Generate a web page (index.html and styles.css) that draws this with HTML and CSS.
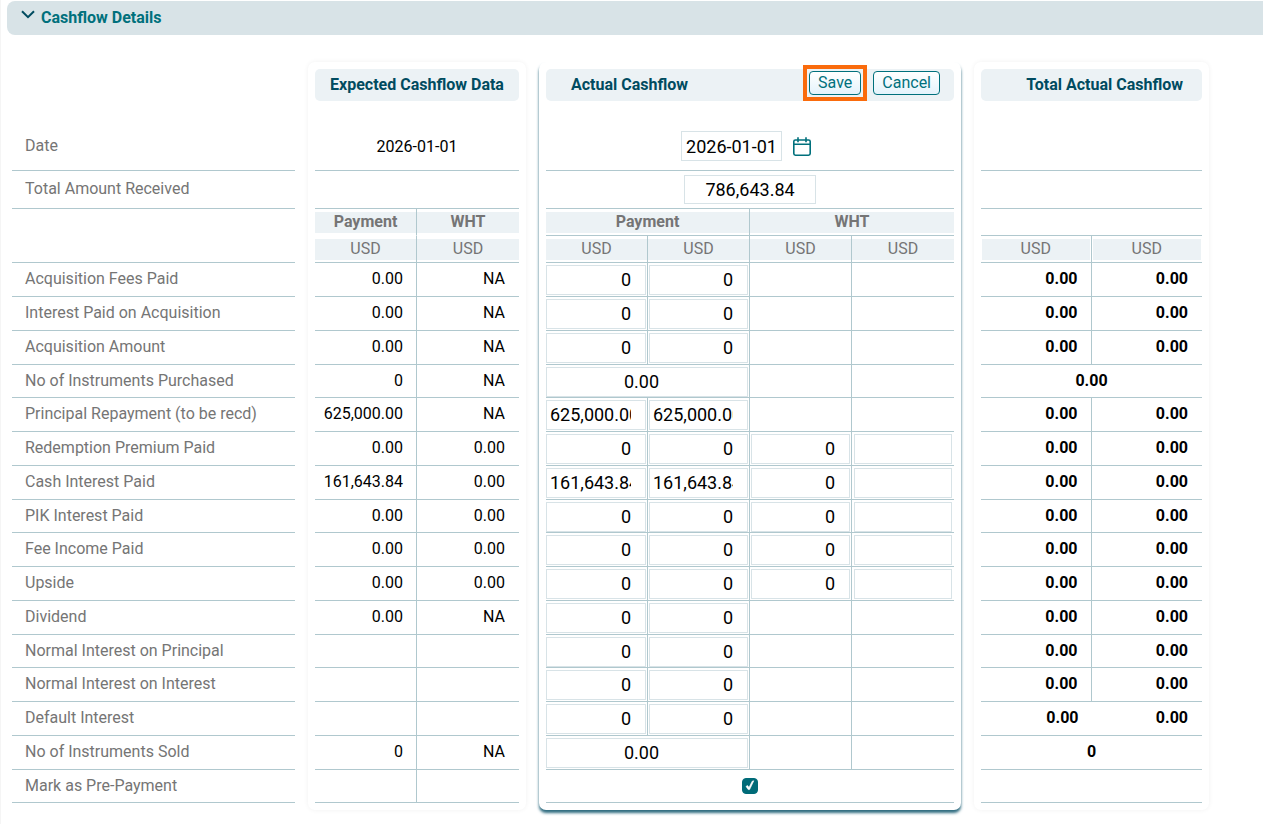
FILE: index.html
```html
<!DOCTYPE html>
<html lang="en">
<head>
  <meta charset="utf-8">
  <title>Cashflow Details</title>
  <link rel="stylesheet" href="styles.css">
</head>

<body>

<div class="panel">

  <h2 class="panel-title">
    <button type="button" class="panel-toggle" aria-expanded="true">
      <svg class="chevron" viewBox="0 0 14 9" width="14" height="9" aria-hidden="true"><path d="M1 1.2 L7 7.2 L13 1.2"/></svg>
      Cashflow Details
    </button>
  </h2>

  <form class="cashflow">

    <!-- row names -->
    <div class="labels">
      <table>
        <thead>
          <tr class="date-row"><th scope="row">Date</th></tr>
          <tr class="total-row"><th scope="row">Total Amount Received</th></tr>
          <tr class="blank-row"><td></td></tr>
        </thead>
        <tbody>
          <tr><th scope="row">Acquisition Fees Paid</th></tr>
          <tr><th scope="row">Interest Paid on Acquisition</th></tr>
          <tr><th scope="row">Acquisition Amount</th></tr>
          <tr><th scope="row">No of Instruments Purchased</th></tr>
          <tr><th scope="row">Principal Repayment (to be recd)</th></tr>
          <tr><th scope="row">Redemption Premium Paid</th></tr>
          <tr><th scope="row">Cash Interest Paid</th></tr>
          <tr><th scope="row">PIK Interest Paid</th></tr>
          <tr><th scope="row">Fee Income Paid</th></tr>
          <tr><th scope="row">Upside</th></tr>
          <tr><th scope="row">Dividend</th></tr>
          <tr><th scope="row">Normal Interest on Principal</th></tr>
          <tr><th scope="row">Normal Interest on Interest</th></tr>
          <tr><th scope="row">Default Interest</th></tr>
          <tr><th scope="row">No of Instruments Sold</th></tr>
          <tr><th scope="row"><label for="prepayment">Mark as Pre-Payment</label></th></tr>
        </tbody>
      </table>
    </div>

    <!-- expected -->
    <div class="card expected">
      <div class="card-header"><h3>Expected Cashflow Data</h3></div>
      <table>
        <thead>
          <tr class="date-row"><td colspan="2">2026-01-01</td></tr>
          <tr class="total-row"><td colspan="2"></td></tr>
          <tr class="head-row no-line"><th scope="col"><span>Payment</span></th><th scope="col"><span>WHT</span></th></tr>
          <tr class="head-row unit"><th scope="col"><span>USD</span></th><th scope="col"><span>USD</span></th></tr>
        </thead>
        <tbody>
          <tr><td>0.00</td><td>NA</td></tr>
          <tr><td>0.00</td><td>NA</td></tr>
          <tr><td>0.00</td><td>NA</td></tr>
          <tr><td>0</td><td>NA</td></tr>
          <tr><td>625,000.00</td><td>NA</td></tr>
          <tr><td>0.00</td><td>0.00</td></tr>
          <tr><td>161,643.84</td><td>0.00</td></tr>
          <tr><td>0.00</td><td>0.00</td></tr>
          <tr><td>0.00</td><td>0.00</td></tr>
          <tr><td>0.00</td><td>0.00</td></tr>
          <tr><td>0.00</td><td>NA</td></tr>
          <tr><td></td><td></td></tr>
          <tr><td></td><td></td></tr>
          <tr><td></td><td></td></tr>
          <tr><td>0</td><td>NA</td></tr>
          <tr><td></td><td></td></tr>
        </tbody>
      </table>
    </div>

    <!-- actual, editable -->
    <div class="card actual">
      <div class="card-header">
        <h3>Actual Cashflow</h3>
        <div class="actions">
          <span class="highlight"><button type="submit" class="btn">Save</button></span>
          <button type="button" class="btn">Cancel</button>
        </div>
      </div>
      <table>
        <thead>
          <tr class="date-row">
            <td colspan="4">
              <div class="date-field">
                <input type="text" class="date-input" aria-label="Date" value="2026-01-01">
                <button type="button" class="calendar" aria-label="Open calendar">
                  <svg viewBox="0 0 18 19" width="18" height="19" aria-hidden="true"><rect x="0.8" y="3" width="16.4" height="15.2" rx="1.6"/><path d="M1 7.3 H17 M5 0.3 V5.3 M13 0.3 V5.3"/></svg>
                </button>
              </div>
            </td>
          </tr>
          <tr class="total-row"><td colspan="4"><input type="text" class="total-input" aria-label="Total Amount Received" value="786,643.84"></td></tr>
          <tr class="head-row"><th scope="colgroup" colspan="2"><span>Payment</span></th><th scope="colgroup" colspan="2"><span>WHT</span></th></tr>
          <tr class="head-row unit"><th scope="col"><span>USD</span></th><th scope="col"><span>USD</span></th><th scope="col"><span>USD</span></th><th scope="col"><span>USD</span></th></tr>
        </thead>
        <tbody>
          <tr><td><input type="text" aria-label="Acquisition Fees Paid, payment 1" value="0"></td><td><input type="text" aria-label="Acquisition Fees Paid, payment 2" value="0"></td><td></td><td></td></tr>
          <tr><td><input type="text" aria-label="Interest Paid on Acquisition, payment 1" value="0"></td><td><input type="text" aria-label="Interest Paid on Acquisition, payment 2" value="0"></td><td></td><td></td></tr>
          <tr><td><input type="text" aria-label="Acquisition Amount, payment 1" value="0"></td><td><input type="text" aria-label="Acquisition Amount, payment 2" value="0"></td><td></td><td></td></tr>
          <tr><td colspan="2"><input type="text" class="wide" aria-label="No of Instruments Purchased" value="0.00"></td><td></td><td></td></tr>
          <tr><td><input type="text" aria-label="Principal Repayment, payment 1" value="625,000.00"></td><td><input type="text" aria-label="Principal Repayment, payment 2" value="625,000.00"></td><td></td><td></td></tr>
          <tr><td><input type="text" aria-label="Redemption Premium Paid, payment 1" value="0"></td><td><input type="text" aria-label="Redemption Premium Paid, payment 2" value="0"></td><td><input type="text" aria-label="Redemption Premium Paid, WHT 1" value="0"></td><td><input type="text" aria-label="Redemption Premium Paid, WHT 2"></td></tr>
          <tr><td><input type="text" aria-label="Cash Interest Paid, payment 1" value="161,643.84"></td><td><input type="text" aria-label="Cash Interest Paid, payment 2" value="161,643.84"></td><td><input type="text" aria-label="Cash Interest Paid, WHT 1" value="0"></td><td><input type="text" aria-label="Cash Interest Paid, WHT 2"></td></tr>
          <tr><td><input type="text" aria-label="PIK Interest Paid, payment 1" value="0"></td><td><input type="text" aria-label="PIK Interest Paid, payment 2" value="0"></td><td><input type="text" aria-label="PIK Interest Paid, WHT 1" value="0"></td><td><input type="text" aria-label="PIK Interest Paid, WHT 2"></td></tr>
          <tr><td><input type="text" aria-label="Fee Income Paid, payment 1" value="0"></td><td><input type="text" aria-label="Fee Income Paid, payment 2" value="0"></td><td><input type="text" aria-label="Fee Income Paid, WHT 1" value="0"></td><td><input type="text" aria-label="Fee Income Paid, WHT 2"></td></tr>
          <tr><td><input type="text" aria-label="Upside, payment 1" value="0"></td><td><input type="text" aria-label="Upside, payment 2" value="0"></td><td><input type="text" aria-label="Upside, WHT 1" value="0"></td><td><input type="text" aria-label="Upside, WHT 2"></td></tr>
          <tr><td><input type="text" aria-label="Dividend, payment 1" value="0"></td><td><input type="text" aria-label="Dividend, payment 2" value="0"></td><td></td><td></td></tr>
          <tr><td><input type="text" aria-label="Normal Interest on Principal, payment 1" value="0"></td><td><input type="text" aria-label="Normal Interest on Principal, payment 2" value="0"></td><td></td><td></td></tr>
          <tr><td><input type="text" aria-label="Normal Interest on Interest, payment 1" value="0"></td><td><input type="text" aria-label="Normal Interest on Interest, payment 2" value="0"></td><td></td><td></td></tr>
          <tr><td><input type="text" aria-label="Default Interest, payment 1" value="0"></td><td><input type="text" aria-label="Default Interest, payment 2" value="0"></td><td></td><td></td></tr>
          <tr><td colspan="2"><input type="text" class="wide" aria-label="No of Instruments Sold" value="0.00"></td><td></td><td></td></tr>
          <tr><td colspan="4" class="check-cell">
            <span class="check">
              <input type="checkbox" id="prepayment" checked>
              <svg viewBox="0 0 16 16" width="16" height="16" aria-hidden="true"><path d="M4 8.4 L5.6 7.6 L7 9.4 L10.2 3.2 L11.8 2.8 L7.6 11.6 L6.2 11.6 Z"/></svg>
            </span>
          </td></tr>
        </tbody>
      </table>
    </div>

    <!-- totals -->
    <div class="card totals">
      <div class="card-header"><h3>Total Actual Cashflow</h3></div>
      <table>
        <thead>
          <tr class="date-row"><td colspan="2"></td></tr>
          <tr class="total-row"><td colspan="2"></td></tr>
          <tr class="head-row"><td colspan="2"></td></tr>
          <tr class="head-row unit"><th scope="col"><span>USD</span></th><th scope="col"><span>USD</span></th></tr>
        </thead>
        <tbody>
          <tr><td>0.00</td><td>0.00</td></tr>
          <tr><td>0.00</td><td>0.00</td></tr>
          <tr><td>0.00</td><td>0.00</td></tr>
          <tr><td colspan="2" class="merged">0.00</td></tr>
          <tr><td>0.00</td><td>0.00</td></tr>
          <tr><td>0.00</td><td>0.00</td></tr>
          <tr><td>0.00</td><td>0.00</td></tr>
          <tr><td>0.00</td><td>0.00</td></tr>
          <tr><td>0.00</td><td>0.00</td></tr>
          <tr><td>0.00</td><td>0.00</td></tr>
          <tr><td>0.00</td><td>0.00</td></tr>
          <tr><td>0.00</td><td>0.00</td></tr>
          <tr><td>0.00</td><td>0.00</td></tr>
          <tr class="open"><td>0.00</td><td>0.00</td></tr>
          <tr><td colspan="2" class="merged">0</td></tr>
          <tr><td colspan="2"></td></tr>
        </tbody>
      </table>
    </div>

  </form>
</div>

</body>
</html>
```
FILE: styles.css
```css
* {
  box-sizing: border-box;
}

body {
  margin: 0;
  background-color: #fff;
  color: #000;
  font-family: Roboto, sans-serif;
  font-size: 16px;
  line-height: 20px;
}

input,
button {
  font-family: inherit;
  color: inherit;
}

.panel {
  border-left: 1px solid #f5f5f5;
  padding: 1px 0 14px 6px;
}

.panel-title {
  margin: 0;
}

.panel-toggle {
  display: flex;
  align-items: center;
  gap: 6px;
  width: 100%;
  height: 34px;
  padding: 0 14px 2px;
  border: 0;
  border-radius: 8px 0 0 8px;
  background-color: #d8e3e7;
  color: #00707c;
  font-size: 16px;
  font-weight: 700;
  cursor: pointer;
}

.chevron {
  margin-bottom: 5px;
  fill: none;
  stroke: #004b60;
  stroke-width: 2;
}

/* columns */

.cashflow {
  display: grid;
  grid-template-columns: minmax(0, 283fr) minmax(0, 218fr) minmax(0, 422fr) minmax(0, 235fr);
  gap: 13px;
  padding: 27px 54px 0 5px;
}

.labels {
  padding-top: 39px;
}

.card {
  padding: 7px;
  border-radius: 7px;
  box-shadow: 0 0 5px rgba(0, 0, 0, 0.06);
}

.actual {
  box-shadow: 0 3px 3px #2f6c80;
}

.card-header {
  display: flex;
  justify-content: center;
  height: 32px;
  border-radius: 5px;
  background-color: #ecf2f5;
}

.card-header h3 {
  margin: 0;
  color: #004b60;
  font-size: 16px;
  font-weight: 700;
  line-height: 32px;
}

.actual .card-header {
  justify-content: space-between;
  padding: 0 14px 0 25px;
}

.totals .card-header {
  justify-content: flex-end;
  padding-right: 19px;
}

.actions {
  display: flex;
  align-items: flex-start;
  gap: 12px;
  padding-top: 2px;
}

.highlight {
  display: flex;
  outline: 4px solid #fa6b0c;
  outline-offset: 2px;
}

.btn {
  height: 24px;
  padding: 0 8px;
  border: 1px solid #00707c;
  border-radius: 4px;
  background: linear-gradient(#fff, #e4f3fb);
  color: #00707c;
  font-size: 16px;
  line-height: 20px;
  cursor: pointer;
}

/* tables */

table {
  width: 100%;
  table-layout: fixed;
  border-collapse: separate;
  border-spacing: 0;
}

th,
td {
  padding: 6px 13px 0;
  border-bottom: 1px solid #b0c8ce;
  font-weight: 400;
  text-align: right;
  vertical-align: top;
}

tbody tr {
  height: 34px;
}

tbody tr:nth-child(4n) {
  height: 33px;
}

tbody td,
.head-row th {
  border-right: 1px solid #b0c8ce;
}

tbody td:last-child,
.head-row th:last-child {
  border-right: 0;
}

.expected tbody td:last-child {
  padding-right: 14px;
}

.expected tbody td {
  padding-left: 0;
}

.totals td {
  padding-right: 14px;
  padding-left: 0;
}

.totals tbody td:first-child {
  padding-right: 13px;
}

.labels th {
  color: #757575;
  text-align: left;
}

.date-row {
  height: 70px;
}

.date-row th,
.date-row td {
  padding-top: 35px;
  text-align: center;
}

.expected .date-row td {
  padding-top: 36px;
}

.labels .date-row th {
  text-align: left;
}

.total-row {
  height: 38px;
}

.total-row th {
  padding-top: 8px;
}

.blank-row {
  height: 54px;
}

.head-row {
  height: 27px;
}

.head-row th {
  padding: 3px 0 2px;
  color: #757575;
  font-weight: 700;
  text-align: center;
}

.head-row.unit th {
  font-weight: 400;
}

.head-row.no-line th {
  border-bottom-color: transparent;
}

.head-row span {
  display: block;
  height: 21px;
  background-color: #ecf2f5;
}

.totals .head-row span {
  margin: 0 1px;
}

.totals tbody td {
  font-weight: 700;
}

.totals tbody td.merged {
  padding-right: 0;
  text-align: center;
}

.open td {
  border-right: 0;
}

/* editable cells */

.actual td {
  padding: 2px 1px 0;
}

.actual td:first-child {
  padding-left: 0;
}

.actual tbody td:last-child {
  padding: 2px 2px 0;
}

.actual input[type="text"] {
  display: block;
  width: 100%;
  height: 30px;
  padding: 0 14px 2px 3px;
  border: 1px solid #d8e3e7;
  border-radius: 0;
  background-color: #fff;
  font-size: 18px;
  text-align: right;
}

.actual input.wide {
  text-align: center;
}

.actual .date-row td {
  padding: 30px 0 0;
}

.date-field {
  display: flex;
  justify-content: center;
  gap: 3px;
}

.actual input.date-input {
  width: 101px;
  padding: 0;
  text-align: center;
}

.calendar {
  display: flex;
  align-items: center;
  padding: 0 8px;
  border: 0;
  background: none;
  cursor: pointer;
}

.calendar svg {
  fill: none;
  stroke: #00707c;
  stroke-width: 1.6;
}

.actual .total-row td {
  padding: 4px 0 0;
}

.actual input.total-input {
  width: 132px;
  height: 29px;
  margin: 0 auto;
  padding: 0;
  text-align: center;
}

.actual tbody td.check-cell {
  padding-top: 8px;
}

.check {
  display: grid;
  justify-content: center;
}

.check input,
.check svg {
  grid-area: 1 / 1;
}

.check input {
  appearance: none;
  width: 16px;
  height: 16px;
  margin: 0;
  border: 1px solid #006b78;
  border-radius: 4px;
}

.check input:checked {
  background-color: #006b78;
}

.check svg {
  display: none;
  fill: #fff;
  stroke: #fff;
  stroke-width: 0.6;
  pointer-events: none;
}

.check input:checked + svg {
  display: block;
}
```
